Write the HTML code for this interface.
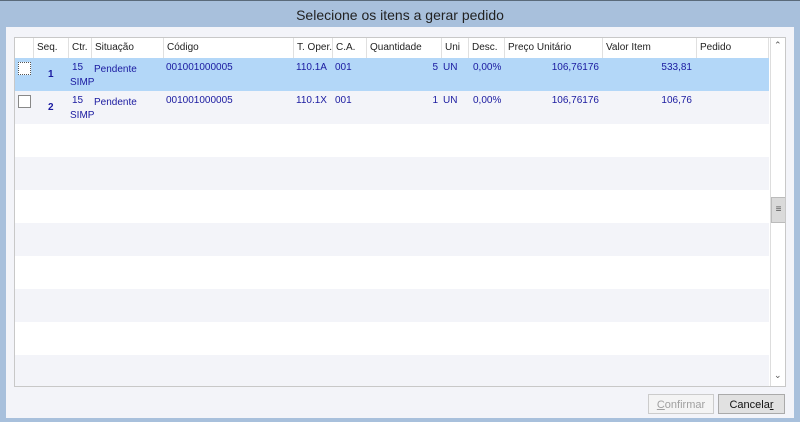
<!DOCTYPE html><html><head><style>
body{margin:0;width:800px;height:422px;background:#a8c0dc;position:relative;overflow:hidden;font-family:"Liberation Sans",sans-serif}
.top{position:absolute;left:0;top:0;width:800px;height:1px;background:#5a6a7a}
.title{position:absolute;left:0;top:7px;width:800px;text-align:center;font-size:14px;color:#222}
.panel{position:absolute;left:6px;top:27px;width:788px;height:391px;background:#f3f4f9}
.grid{position:absolute;left:14px;top:37px;width:770px;height:348px;border:1px solid #c8c8c8;background:#fff;overflow:hidden}
.hdr{position:absolute;left:0;top:0;height:20px;width:754px;background:#fff;font-size:10px;color:#222}
.hdr div{position:absolute;top:0;height:20px;line-height:20px;border-right:1px solid #e0e0e0;padding-left:3px;box-sizing:border-box}
.row{position:absolute;left:0;width:754px;height:33px;font-size:10px;color:#1a1aa0}
.row span{position:absolute;top:4px}
.row span.r{text-align:right}
.cb{position:absolute;left:3px;top:4px;width:11px;height:11px;border:1px solid #555;background:#fff}
.sb{position:absolute;left:755px;top:0;width:15px;height:348px;background:#fff;border-left:1px solid #ddd}
.btn{position:absolute;top:394px;height:20px;font-size:11px;line-height:20px;text-align:center;box-sizing:border-box}
</style></head><body>
<div class="top"></div>
<div class="title">Selecione os itens a gerar pedido</div>
<div class="panel"></div>
<div class="grid">
<div class="hdr">
<div style="left:0;width:19px"></div>
<div style="left:19px;width:35px">Seq.</div>
<div style="left:54px;width:23px">Ctr.</div>
<div style="left:77px;width:72px">Situação</div>
<div style="left:149px;width:130px">Código</div>
<div style="left:279px;width:39px">T. Oper.</div>
<div style="left:318px;width:34px">C.A.</div>
<div style="left:352px;width:75px">Quantidade</div>
<div style="left:427px;width:27px">Uni</div>
<div style="left:454px;width:36px">Desc.</div>
<div style="left:490px;width:98px">Preço Unitário</div>
<div style="left:588px;width:94px">Valor Item</div>
<div style="left:682px;width:72px">Pedido</div>
</div>
<div class="row" style="top:20px;background:#b3d7f8">
<div class="cb" style="border-style:dotted"></div><span style="left:33px;top:11px;font-weight:bold">1</span><span style="left:57px">15</span><span style="left:55px;top:19px">SIMP</span><span style="left:79px;top:6px">Pendente</span><span style="left:151px">001001000005</span><span style="left:281px">110.1A</span><span style="left:320px">001</span><span class="r" style="left:380px;width:43px">5</span><span style="left:428px">UN</span><span style="left:458px">0,00%</span><span class="r" style="left:500px;width:84px">106,76176</span><span class="r" style="left:600px;width:77px">533,81</span></div>
<div class="row" style="top:53px;background:#f3f4f9">
<div class="cb" style="border-color:#888"></div><span style="left:33px;top:11px;font-weight:bold">2</span><span style="left:57px">15</span><span style="left:55px;top:19px">SIMP</span><span style="left:79px;top:6px">Pendente</span><span style="left:151px">001001000005</span><span style="left:281px">110.1X</span><span style="left:320px">001</span><span class="r" style="left:380px;width:43px">1</span><span style="left:428px">UN</span><span style="left:458px">0,00%</span><span class="r" style="left:500px;width:84px">106,76176</span><span class="r" style="left:600px;width:77px">106,76</span></div>
<div class="row" style="top:119px;background:#f3f4f9"></div>
<div class="row" style="top:185px;background:#f3f4f9"></div>
<div class="row" style="top:251px;background:#f3f4f9"></div>
<div class="row" style="top:317px;background:#f3f4f9"></div>
<div class="sb">
<div style="position:absolute;left:3px;top:2px;font-size:9px;color:#555">&#8963;</div>
<div style="position:absolute;left:0;top:159px;width:13px;height:24px;background:#dadada;border:1px solid #bbb;font-size:10px;text-align:center;line-height:24px;color:#555">≡</div>
<div style="position:absolute;left:3px;top:332px;font-size:9px;color:#555">&#8964;</div>
</div>
</div>
<div class="btn" style="left:648px;width:66px;border:1px solid #ccc;background:#f4f4f4;color:#a0a0a0"><u>C</u>onfirmar</div>
<div class="btn" style="left:718px;width:67px;border:1px solid #aaa;background:#e1e1e1;color:#111">Cancela<u>r</u></div>
</body></html>
